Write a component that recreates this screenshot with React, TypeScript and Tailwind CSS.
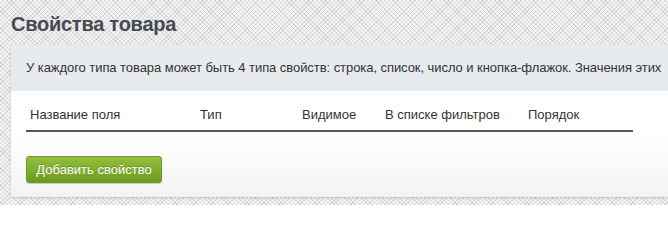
import React from "react";

export default function App() {
  const cols = [
    { label: "Название поля", w: "w-[170px]" },
    { label: "Тип", w: "w-[102px]" },
    { label: "Видимое", w: "w-[83px]" },
    { label: "В списке фильтров", w: "w-[143px]" },
    { label: "Порядок", w: "flex-1" },
  ];
  return (
    <div className="h-[205px] w-[668px] overflow-hidden bg-[#f6f6f6] bg-[repeating-linear-gradient(45deg,transparent_0px,transparent_2px,rgba(0,0,0,0.09)_2px,rgba(0,0,0,0.09)_3px),repeating-linear-gradient(-45deg,transparent_0px,transparent_2px,rgba(0,0,0,0.09)_2px,rgba(0,0,0,0.09)_3px)] font-['Liberation_Sans',Arial,sans-serif]">
      <h1 className="pl-[11px] pt-[12px] text-[20px] font-bold leading-[24px] tracking-[-0.25px] text-[#464a52]">
        Свойства товара
      </h1>
      <div className="ml-[11px] mt-[9px] h-[152px] bg-[linear-gradient(#ffffff_60%,#f3f3f3)] shadow-[0_1px_2px_rgba(0,0,0,0.18)]">
        <div className="flex h-[46px] items-center whitespace-nowrap bg-[#e8ebee] pl-[15px] text-[13px] tracking-[-0.06px] text-[#333333]">
          У каждого типа товара может быть 4 типа свойств: строка, список, число и кнопка-флажок. Значения этих
        </div>
        <div className="ml-[15px] w-[607px]">
          <div className="flex border-b-2 border-[#55575c] pb-[8px] pl-[4px] pt-[17px] text-[13px] leading-[14px] text-[#333333]">
            {cols.map((c) => (
              <div key={c.label} className={c.w}>
                {c.label}
              </div>
            ))}
          </div>
        </div>
        <div className="ml-[15px] mt-[24px]">
          <button className="h-[27px] w-[136px] rounded-[3px] border border-[#6f9a26] bg-[linear-gradient(#93c13d,#6d991f)] text-[13px] text-white shadow-[0_1px_1px_rgba(0,0,0,0.2)] [text-shadow:0_-1px_0_rgba(0,0,0,0.2)]">
            Добавить свойство
          </button>
        </div>
      </div>
    </div>
  );
}
